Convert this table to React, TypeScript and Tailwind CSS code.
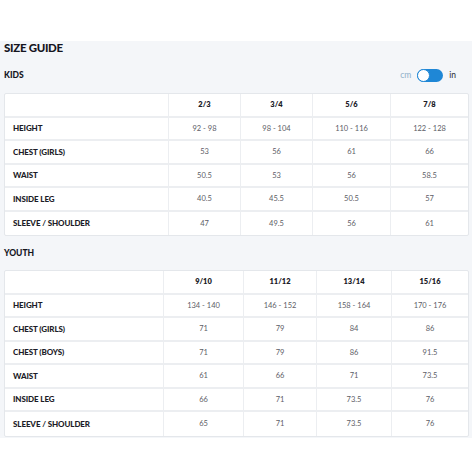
import React from "react";

const kids = {
  sizes: ["2/3", "3/4", "5/6", "7/8"],
  widths: [164, 72, 72, 78, 77],
  rows: [
    ["HEIGHT", "92 - 98", "98 - 104", "110 - 116", "122 - 128"],
    ["CHEST (GIRLS)", "53", "56", "61", "66"],
    ["WAIST", "50.5", "53", "56", "58.5"],
    ["INSIDE LEG", "40.5", "45.5", "50.5", "57"],
    ["SLEEVE / SHOULDER", "47", "49.5", "56", "61"],
  ],
};

const youth = {
  sizes: ["9/10", "11/12", "13/14", "15/16"],
  widths: [159, 80, 73, 75, 76],
  rows: [
    ["HEIGHT", "134 - 140", "146 - 152", "158 - 164", "170 - 176"],
    ["CHEST (GIRLS)", "71", "79", "84", "86"],
    ["CHEST (BOYS)", "71", "79", "86", "91.5"],
    ["WAIST", "61", "66", "71", "73.5"],
    ["INSIDE LEG", "66", "71", "73.5", "76"],
    ["SLEEVE / SHOULDER", "65", "71", "73.5", "76"],
  ],
};

function SizeTable({ data }: { data: typeof kids }) {
  return (
    <table className="border-separate border-spacing-0 bg-white border border-[#e4e7eb] rounded-[2px] table-fixed w-[463px]">
      <colgroup>
        {data.widths.map((w, i) => (
          <col key={i} style={{ width: w }} />
        ))}
      </colgroup>
      <tbody>
        <tr className="h-[23.5px]">
          <td className="border-r border-b-2 border-[#eceef1]"></td>
          {data.sizes.map((s, i) => (
            <td
              key={s}
              className={`text-center font-extrabold text-[7.5px] text-[#1c1c28] border-b-2 border-[#eceef1] ${i < 3 ? "border-r" : ""}`}
            >
              {s}
            </td>
          ))}
        </tr>
        {data.rows.map((r, ri) => (
          <tr key={ri} className="h-[23.5px]">
            {r.map((c, ci) => (
              <td
                key={ci}
                className={
                  (ci === 0
                    ? "pl-[8px] font-black text-[8px] text-[#1c1c28] tracking-[-0.1px] "
                    : "text-center text-[7.5px] text-[#5d5d66] ") +
                  (ci < 4 ? "border-r border-[#eceef1] " : "border-[#eceef1] ") +
                  (ri < data.rows.length - 1 ? "border-b-2" : "")
                }
              >
                {c}
              </td>
            ))}
          </tr>
        ))}
      </tbody>
    </table>
  );
}

export default function App() {
  return (
    <div
      className="w-[472px] h-[472px] bg-white overflow-hidden"
      style={{ fontFamily: "Lato, 'Open Sans', sans-serif" }}
    >
      <div className="h-[41px]" />
      <div className="bg-[#f4f6f9] pl-[4px] pb-[1px]">
        <div className="text-[11.5px] leading-[14px] font-black text-[#15151f] tracking-[-0.3px]">SIZE GUIDE</div>
        <div className="flex items-center justify-between h-[16px] mt-[12px] pr-[16px]">
          <div className="text-[8.5px] font-black text-[#15151f]">KIDS</div>
          <div className="flex items-center gap-[6px]">
            <span className="text-[8.5px] text-[#8fb0c9]">cm</span>
            <span className="relative w-[26px] h-[13px] rounded-full bg-[#1f87d6] flex items-center">
              <span className="absolute left-0 top-0 w-[13px] h-[13px] rounded-full bg-white border-[1.5px] border-[#1f87d6]" />
            </span>
            <span className="text-[8.5px] text-[#2a2a35]">in</span>
          </div>
        </div>
        <div className="mt-[10px]">
          <SizeTable data={kids} />
        </div>
        <div className="h-[34px] flex items-center text-[8.5px] font-black text-[#15151f]">YOUTH</div>
        <SizeTable data={youth} />
      </div>
    </div>
  );
}
